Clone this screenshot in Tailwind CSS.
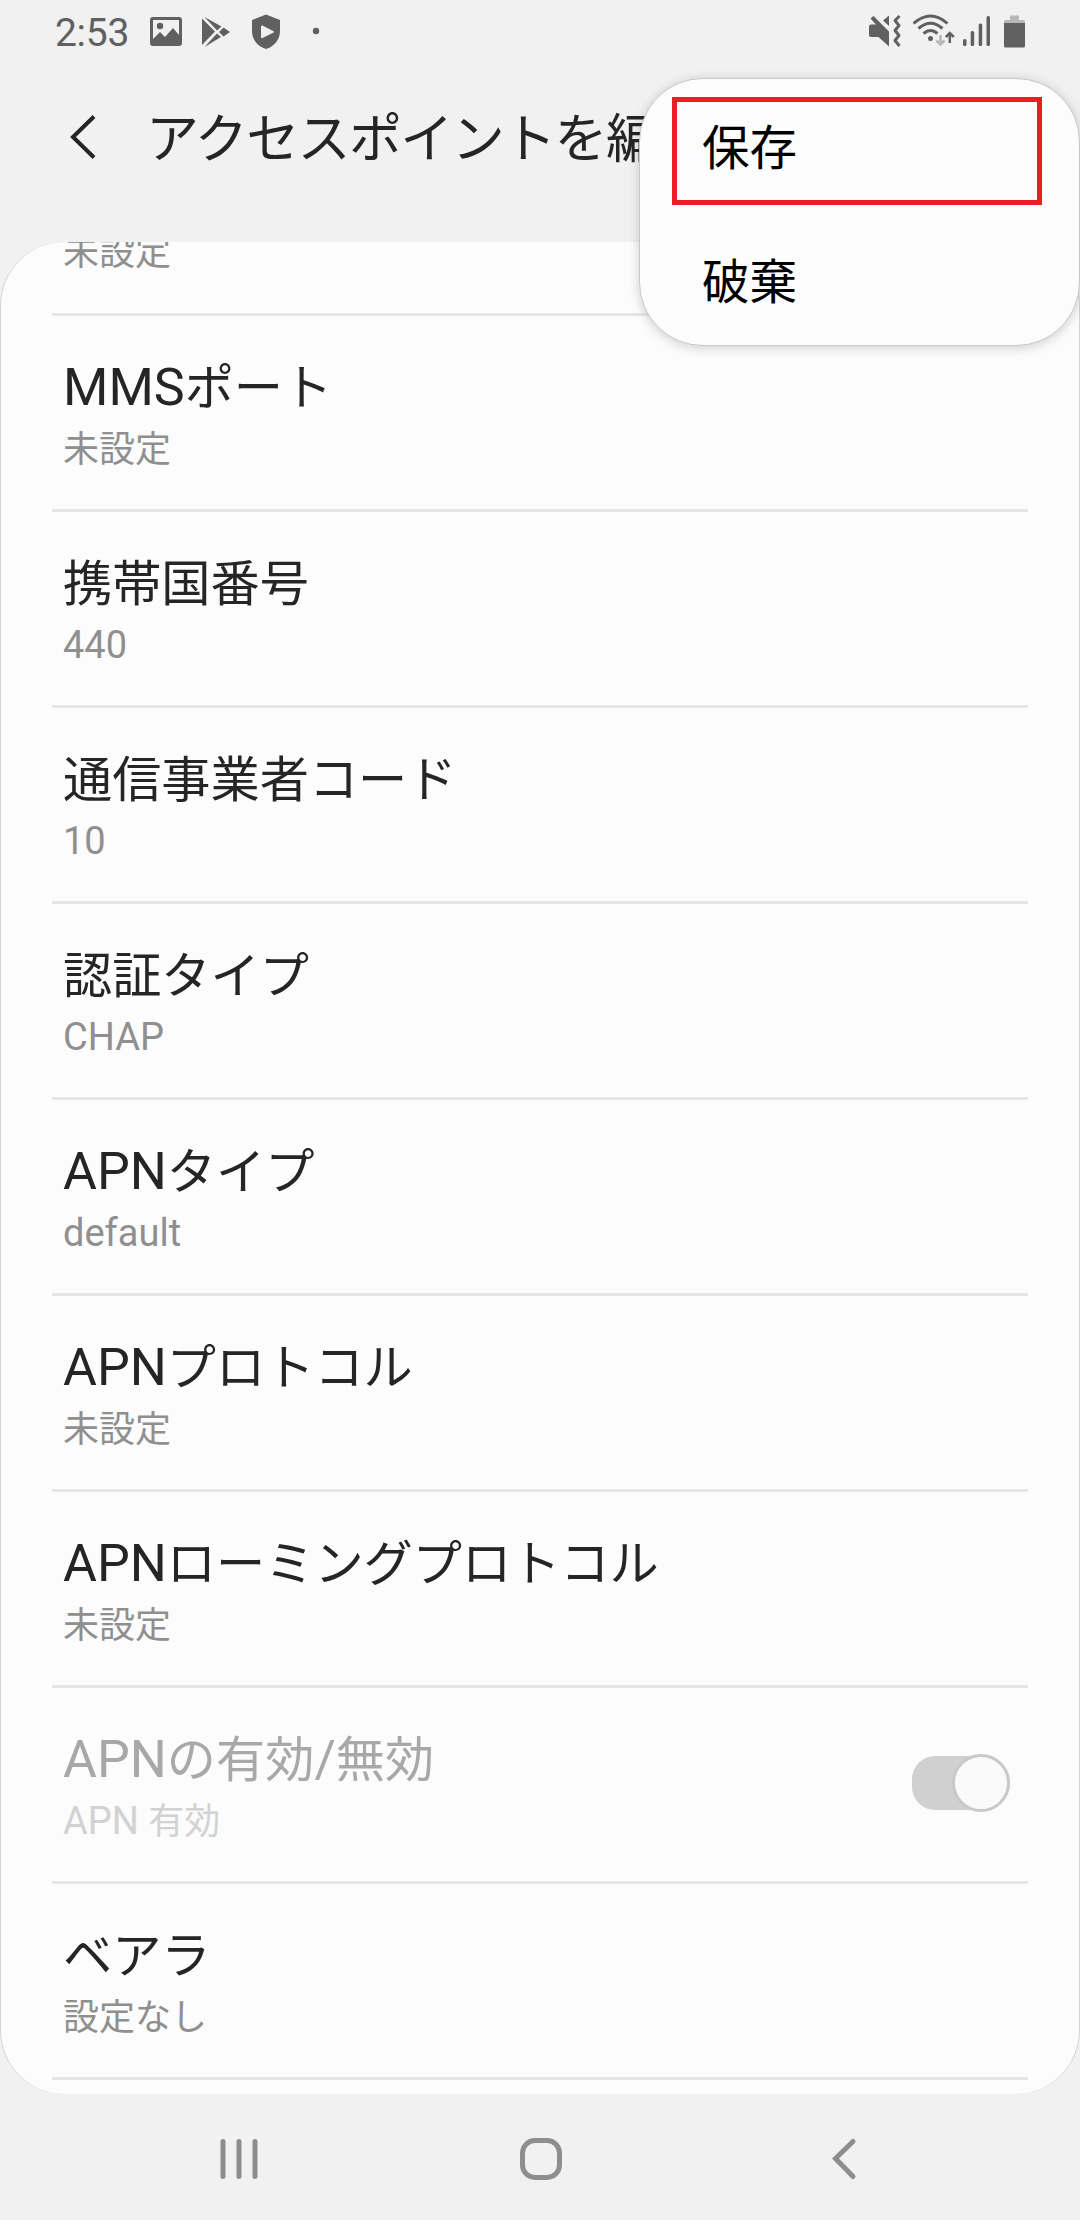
<!DOCTYPE html>
<html lang="ja">
  <head>
    <meta charset="UTF-8" />
    <meta name="viewport" content="width=device-width, initial-scale=1.0" />
    <title>アクセスポイントを編集</title>
    <script src="https://cdn.jsdelivr.net/npm/@tailwindcss/browser@4"></script>
  </head>

  <body
    class="relative w-[1080px] h-[2220px] bg-[#f1f1f1] flex flex-col overflow-hidden whitespace-nowrap text-[#252525]"
    style="font-family: Roboto, 'Noto Sans CJK JP', sans-serif">
    <!-- Status bar -->
    <div class="h-[62px] shrink-0 flex items-start justify-between pl-[55px] pr-[55px] text-[#606060]">
      <div class="flex">
        <span class="w-[95px] text-[39px] leading-[67px] tracking-[-0.3px]">2:53</span>
        <svg class="w-8 h-[62px]" viewBox="150 0 32 62" fill="currentColor">
          <path fill-rule="evenodd" d="M153 17h26a3 3 0 0 1 3 3v23a3 3 0 0 1-3 3h-26a3 3 0 0 1-3-3V20a3 3 0 0 1 3-3zM153 20v19l7-7 5 5 8-9 6 7V20z" />
          <circle cx="160" cy="26" r="3.2" />
        </svg>
        <svg class="w-7 h-[62px] ml-5" viewBox="202 0 28 62" fill="currentColor">
          <path d="M202 18.500L215 31.500L202 45z" />
          <path d="M204.500 17L221.500 26.500L217 30.500z" />
          <path d="M204.500 47L217 33.500L221 37z" />
          <path d="M223.500 27.500L230 32L223.500 36.500L219 32z" />
        </svg>
        <svg class="w-7 h-[62px] ml-[22px]" viewBox="252 0 28 62" fill="currentColor">
          <path fill-rule="evenodd" d="M266 14.500L280 20V31C280 40 274 46.500 266 49C258 46.500 252 40 252 31V20zM261 26.500V37.500Q261.500 38.500 262.500 38L273.500 32.500Q274.500 32 273.500 31.300L262.500 25.500Q261.300 25.300 261 26.500z" />
        </svg>
        <svg class="w-2 h-[62px] ml-8" viewBox="312 0 8 62" fill="currentColor">
          <circle cx="316" cy="31" r="3.200" />
        </svg>
      </div>

      <div class="flex">
        <svg class="w-8 h-[62px]" viewBox="869 0 32 62" fill="currentColor">
          <path d="M871 24.500H876L870.500 18.500L873.500 16L889 31.500V46.500L878.500 37H871Q869 37 869 35V26.500Q869 24.500 871 24.500z" />
          <path d="M889 15.500V26L883 20.500z" />
          <path d="M899.500 16L895 20.500L899 25.500L895 30.500L899 35.500L895 40.500L899.500 46" fill="none" stroke="currentColor" stroke-width="3" stroke-linejoin="round" />
        </svg>
        <svg class="w-[42px] h-[62px] ml-3" viewBox="913 0 42 62" fill="none" stroke="currentColor" stroke-width="3">
          <path d="M913.500 23.500Q930.500 8.500 947.500 23.500M918.500 28.500Q930.500 18 942.500 28.500M923.500 33.500Q930.500 27.500 937.500 33.500" />
          <circle cx="930.500" cy="38.500" r="2.500" fill="currentColor" stroke="none" />
          <path d="M940.500 35V44.500M936.500 40.500L940.500 44.500L944.500 40.500" stroke="#b8b8b8" stroke-width="2.500" />
          <path d="M949.800 43V33M945.800 37L949.800 33L953.800 37" stroke-width="2.500" />
        </svg>
        <svg class="w-7 h-[62px] ml-[7px]" viewBox="962 0 28 62" fill="currentColor">
          <rect x="963" y="39" width="3.500" height="7" rx="1.500" />
          <rect x="970.700" y="31" width="3.500" height="15" rx="1.500" />
          <rect x="978.700" y="23.500" width="3.500" height="22.500" rx="1.500" />
          <rect x="986.500" y="16" width="3.500" height="30" rx="1.500" />
        </svg>
        <svg class="w-[21px] h-[62px] ml-[14px]" viewBox="1004 0 21 62">
          <path d="M1010 15.500h9v4.500h4.500q1.500 0 1.500 1.500V23h-21v-1.500q0-1.500 1.500-1.500h4.500z" fill="#b8b8b8" />
          <path d="M1004 23h21v23q0 1.500-1.500 1.500h-18q-1.500 0-1.500-1.500z" fill="currentColor" />
        </svg>
      </div>
    </div>

    <!-- App bar -->
    <header class="h-[180px] shrink-0 flex items-start pt-[40px] pl-[69px]">
      <svg class="w-7 h-[70px]" viewBox="0 0 28 70" fill="none" stroke="currentColor" stroke-width="4">
        <path d="M25 14.500L4 35L25 55.500" />
      </svg>
      <h1 class="ml-[49px] pt-[3px] text-[53px] leading-[70px] tracking-[-1.6px]">アクセスポイントを編集</h1>
    </header>

    <!-- Settings list -->
    <main class="h-[1852px] shrink-0 bg-[#fcfcfc] rounded-[64px] border-x border-[#d4d4d4] overflow-hidden pl-[51px] pr-[51px]">
      <div class="h-[74px] border-b-3 border-[#e6e6e6] flex items-end pl-[11px] pb-[36px]">
        <p class="text-[38px] leading-[50px] text-[#8f8f8f]"><span class="text-[36px] leading-none">未設定</span></p>
      </div>

      <div class="h-[196px] border-b-3 border-[#e6e6e6] pt-[42px] pl-[11px]">
        <h2 class="text-[52px] leading-[60px]">MMS<span class="text-[49.2px] leading-none">ポート</span></h2>
        <p class="mt-[6px] text-[38px] leading-[50px] text-[#8f8f8f]"><span class="text-[36px] leading-none">未設定</span></p>
      </div>

      <div class="h-[196px] border-b-3 border-[#e6e6e6] pt-[42px] pl-[11px]">
        <h2 class="text-[52px] leading-[60px]"><span class="text-[49.2px] leading-none">携帯国番号</span></h2>
        <p class="mt-[6px] text-[38px] leading-[50px] text-[#8f8f8f]">440</p>
      </div>

      <div class="h-[196px] border-b-3 border-[#e6e6e6] pt-[42px] pl-[11px]">
        <h2 class="text-[52px] leading-[60px]"><span class="text-[49.2px] leading-none">通信事業者コード</span></h2>
        <p class="mt-[6px] text-[38px] leading-[50px] text-[#8f8f8f]">10</p>
      </div>

      <div class="h-[196px] border-b-3 border-[#e6e6e6] pt-[42px] pl-[11px]">
        <h2 class="text-[52px] leading-[60px]"><span class="text-[49.2px] leading-none">認証タイプ</span></h2>
        <p class="mt-[6px] text-[38px] leading-[50px] text-[#8f8f8f]">CHAP</p>
      </div>

      <div class="h-[196px] border-b-3 border-[#e6e6e6] pt-[42px] pl-[11px]">
        <h2 class="text-[52px] leading-[60px]">APN<span class="text-[49.2px] leading-none">タイプ</span></h2>
        <p class="mt-[6px] text-[38px] leading-[50px] text-[#8f8f8f]">default</p>
      </div>

      <div class="h-[196px] border-b-3 border-[#e6e6e6] pt-[42px] pl-[11px]">
        <h2 class="text-[52px] leading-[60px]">APN<span class="text-[49.2px] leading-none">プロトコル</span></h2>
        <p class="mt-[6px] text-[38px] leading-[50px] text-[#8f8f8f]"><span class="text-[36px] leading-none">未設定</span></p>
      </div>

      <div class="h-[196px] border-b-3 border-[#e6e6e6] pt-[42px] pl-[11px]">
        <h2 class="text-[52px] leading-[60px]">APN<span class="text-[49.2px] leading-none">ローミングプロトコル</span></h2>
        <p class="mt-[6px] text-[38px] leading-[50px] text-[#8f8f8f]"><span class="text-[36px] leading-none">未設定</span></p>
      </div>

      <!-- Disabled row with toggle -->
      <div class="h-[196px] border-b-3 border-[#e6e6e6] flex items-start justify-between pl-[11px] pr-[18px]">
        <div class="pt-[42px]">
          <h2 class="text-[52px] leading-[60px] text-[#a8a8a8]">APN<span class="text-[49.2px] leading-none">の有効</span>/<span class="text-[49.2px] leading-none">無効</span></h2>
          <p class="mt-[6px] text-[38px] leading-[50px] text-[#d2d2d2]">APN <span class="text-[36px] leading-none">有効</span></p>
        </div>
        <div class="mt-[68px] w-[98px] h-[54px] flex items-center justify-end rounded-l-[25px] rounded-r-[29px] bg-[#d0d0d0]">
          <div class="w-[58px] h-[58px] shrink-0 -my-[2px] rounded-full bg-[#fafafa] border-3 border-[#c9c9c9]"></div>
        </div>
      </div>

      <div class="h-[196px] border-b-3 border-[#e6e6e6] pt-[42px] pl-[11px]">
        <h2 class="text-[52px] leading-[60px]"><span class="text-[49.2px] leading-none">ベアラ</span></h2>
        <p class="mt-[6px] text-[38px] leading-[50px] text-[#8f8f8f]"><span class="text-[36px] leading-none">設定なし</span></p>
      </div>
    </main>

    <!-- Navigation bar -->
    <nav class="flex-1 flex items-start pt-[42px] pl-[217px] text-[#8e8e8e]">
      <svg class="w-11 h-[46px]" viewBox="0 0 44 46" stroke="currentColor" stroke-width="5" stroke-linecap="round">
        <path d="M6 5.500V40.500M22 5.500V40.500M38 5.500V40.500" />
      </svg>
      <svg class="w-[46px] h-[46px] ml-[257px]" viewBox="0 0 46 46" fill="none" stroke="currentColor" stroke-width="5">
        <rect x="4.500" y="4.500" width="37" height="37" rx="12.500" />
      </svg>
      <svg class="w-7 h-[46px] ml-[266px]" viewBox="0 0 28 46" fill="none" stroke="currentColor" stroke-width="5" stroke-linecap="round">
        <path d="M23 5.500L5.500 22.500L23 40.500" />
      </svg>
    </nav>

    <!-- Overflow menu -->
    <div class="absolute left-[639px] top-[78px] w-[441px] h-[268px] rounded-[64px] bg-[#fcfcfc] border border-[#c8c8c8] shadow-[0_2px_12px_rgba(0,0,0,0.18)] pt-[18px] pl-8 text-black text-[47.5px]">
      <div class="w-[370px] h-[108px] border-5 border-[#ed1c24] pl-[25px] pt-[17px] leading-[60px]">保存</div>
      <div class="pl-[30px] pt-[48px] leading-[60px]">破棄</div>
    </div>
  </body>
</html>
